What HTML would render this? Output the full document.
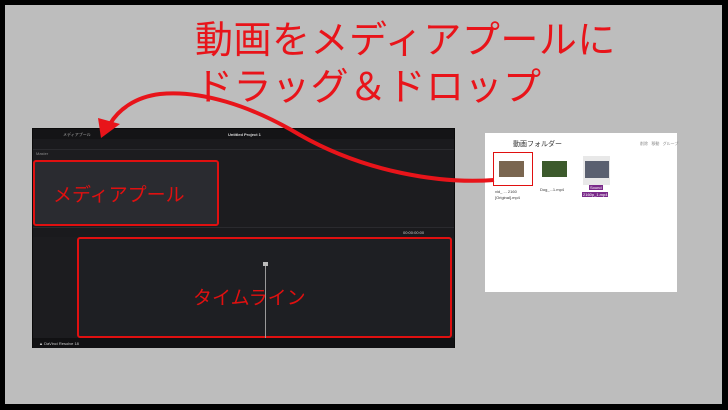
<!DOCTYPE html>
<html><head><meta charset="utf-8"><style>
*{margin:0;padding:0;box-sizing:border-box}
body{width:728px;height:410px;background:#000;position:relative;overflow:hidden;font-family:"Liberation Sans","Noto Sans CJK JP",sans-serif}
.bg{position:absolute;left:5px;top:5px;width:717px;height:399px;background:#bdbdbd}
.abs{position:absolute}
.t{color:#e8141a;font-size:38px;line-height:1;white-space:nowrap;letter-spacing:0.5px}
.app{left:32px;top:128px;width:423px;height:220px;background:#1c1c1f;border:1px solid #0a0a0a}
.bar{background:#141416}
.lbl{color:#e01010;font-size:19px;white-space:nowrap}
.small{color:#888;font-size:4px;white-space:nowrap}
</style></head><body>
<div class="bg"></div>
<div class="abs t" style="left:195px;top:22px">動画をメディアプールに</div>
<div class="abs t" style="left:195px;top:69px">ドラッグ＆ドロップ</div>

<div class="abs app">
  <div class="abs bar" style="left:0;top:0;width:421px;height:10px"></div>
  <div class="abs small" style="left:30px;top:3px;color:#aaa">メディアプール</div>
  <div class="abs small" style="left:195px;top:3px;color:#ddd;font-weight:bold">Untitled Project 1</div>
  <div class="abs" style="left:0;top:10px;width:421px;height:11px;background:#1a1a1d;border-bottom:1px solid #2a2a2e"></div>
  <div class="abs small" style="left:3px;top:22px">Master</div>
  <div class="abs" style="left:0;top:31px;width:186px;height:66px;background:#2a2b30;border:2px solid #e01010;border-radius:3px"></div>
  <div class="abs lbl" style="left:20px;top:51px">メディアプール</div>
  <div class="abs" style="left:0;top:98px;width:421px;height:10px;background:#1a1a1d;border-top:1px solid #2a2a2e"></div>
  <div class="abs small" style="left:370px;top:101px;color:#ccc">00:00:00:00</div>
  <div class="abs" style="left:44px;top:108px;width:375px;height:101px;background:#1e1f23;border:2px solid #e01010;border-radius:3px"></div>
  <div class="abs" style="left:232px;top:134px;width:1px;height:75px;background:#999"></div>
  <div class="abs" style="left:230px;top:133px;width:5px;height:4px;background:#bbb"></div>
  <div class="abs lbl" style="left:160px;top:154px">タイムライン</div>
  <div class="abs" style="left:0;top:209px;width:421px;height:10px;background:#111113"></div>
  <div class="abs small" style="left:6px;top:212px;color:#ccc">▲ DaVinci Resolve 18</div>
</div>

<div class="abs" style="left:485px;top:133px;width:192px;height:159px;background:#fff"></div>
<div class="abs" style="color:#333;font-size:7px;left:513px;top:139px;white-space:nowrap">動画フォルダー</div>
<div class="abs" style="color:#888;font-size:4px;left:640px;top:141px;white-space:nowrap">削除 &nbsp; 移動 &nbsp; グループ</div>
<div class="abs" style="left:493px;top:152px;width:40px;height:34px;border:1.5px solid #e01010"></div>
<div class="abs" style="left:499px;top:161px;width:25px;height:16px;background:#7a6650"></div>
<div class="abs" style="left:542px;top:161px;width:25px;height:16px;background:#3c5a2c"></div>
<div class="abs" style="left:583px;top:156px;width:27px;height:29px;background:#e8e8e8"></div>
<div class="abs" style="left:585px;top:161px;width:24px;height:17px;background:#5a6070"></div>
<div class="abs" style="font-size:4px;color:#333;left:495px;top:189px">vid_ ... 2160</div>
<div class="abs" style="font-size:4px;color:#333;left:495px;top:195px">[Original].mp4</div>
<div class="abs" style="font-size:4px;color:#333;left:540px;top:187px">Dog_...1.mp4</div>
<div class="abs" style="font-size:4px;color:#fff;background:#7a2a8a;left:589px;top:185px;padding:0 1px">Sound</div>
<div class="abs" style="font-size:4px;color:#fff;background:#7a2a8a;left:582px;top:192px;padding:0 1px">2160p_1.mp4</div>

<svg class="abs" style="left:0;top:0" width="728" height="410">
  <path d="M494,180 C440,184 365,172 300,135 C250,105 200,90 160,94 C135,97 118,110 110,124" fill="none" stroke="#e8141a" stroke-width="4"/>
  <polygon points="101,138 98,118 120,124" fill="#e8141a"/>
</svg>
</body></html>
